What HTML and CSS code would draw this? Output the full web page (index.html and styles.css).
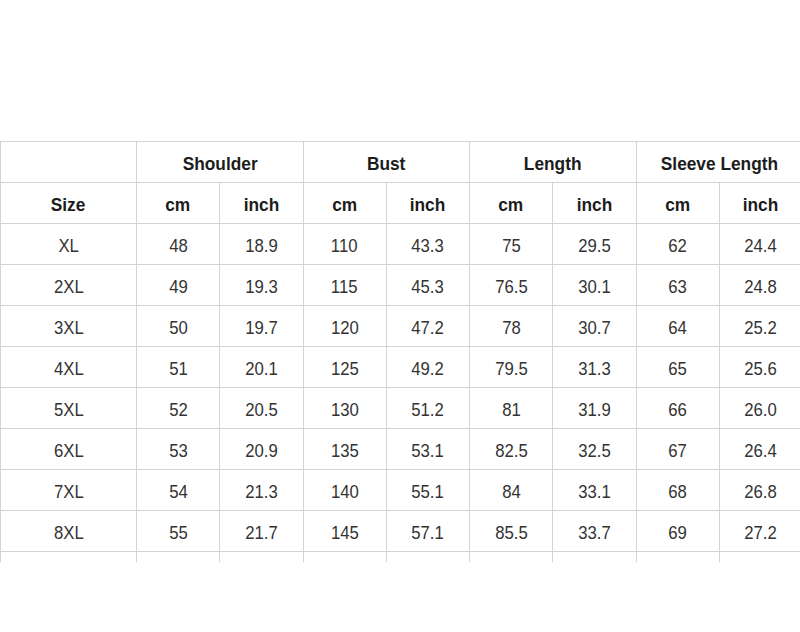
FILE: index.html
```html
<!DOCTYPE html>
<html>
<head>
<meta charset="utf-8">
<link rel="stylesheet" href="styles.css">
</head>
<body>
<div class="page">
<table class="size-table">
<colgroup>
<col class="c-size"><col><col><col><col><col><col><col><col>
</colgroup>
<thead>
<tr class="hrow">
<th class="blank"></th>
<th colspan="2"><span class="h">Shoulder</span></th>
<th colspan="2"><span class="h">Bust</span></th>
<th colspan="2"><span class="h">Length</span></th>
<th colspan="2"><span class="h">Sleeve Length</span></th>
</tr>
<tr class="hrow">
<th><span class="h">Size</span></th>
<th><span class="h">cm</span></th><th><span class="h">inch</span></th>
<th><span class="h">cm</span></th><th><span class="h">inch</span></th>
<th><span class="h">cm</span></th><th><span class="h">inch</span></th>
<th><span class="h">cm</span></th><th><span class="h">inch</span></th>
</tr>
</thead>
<tbody>
<tr><td><span class="d">XL</span></td><td><span class="d">48</span></td><td><span class="d">18.9</span></td><td><span class="d">110</span></td><td><span class="d">43.3</span></td><td><span class="d">75</span></td><td><span class="d">29.5</span></td><td><span class="d">62</span></td><td><span class="d">24.4</span></td></tr>
<tr><td><span class="d">2XL</span></td><td><span class="d">49</span></td><td><span class="d">19.3</span></td><td><span class="d">115</span></td><td><span class="d">45.3</span></td><td><span class="d">76.5</span></td><td><span class="d">30.1</span></td><td><span class="d">63</span></td><td><span class="d">24.8</span></td></tr>
<tr><td><span class="d">3XL</span></td><td><span class="d">50</span></td><td><span class="d">19.7</span></td><td><span class="d">120</span></td><td><span class="d">47.2</span></td><td><span class="d">78</span></td><td><span class="d">30.7</span></td><td><span class="d">64</span></td><td><span class="d">25.2</span></td></tr>
<tr><td><span class="d">4XL</span></td><td><span class="d">51</span></td><td><span class="d">20.1</span></td><td><span class="d">125</span></td><td><span class="d">49.2</span></td><td><span class="d">79.5</span></td><td><span class="d">31.3</span></td><td><span class="d">65</span></td><td><span class="d">25.6</span></td></tr>
<tr><td><span class="d">5XL</span></td><td><span class="d">52</span></td><td><span class="d">20.5</span></td><td><span class="d">130</span></td><td><span class="d">51.2</span></td><td><span class="d">81</span></td><td><span class="d">31.9</span></td><td><span class="d">66</span></td><td><span class="d">26.0</span></td></tr>
<tr><td><span class="d">6XL</span></td><td><span class="d">53</span></td><td><span class="d">20.9</span></td><td><span class="d">135</span></td><td><span class="d">53.1</span></td><td><span class="d">82.5</span></td><td><span class="d">32.5</span></td><td><span class="d">67</span></td><td><span class="d">26.4</span></td></tr>
<tr><td><span class="d">7XL</span></td><td><span class="d">54</span></td><td><span class="d">21.3</span></td><td><span class="d">140</span></td><td><span class="d">55.1</span></td><td><span class="d">84</span></td><td><span class="d">33.1</span></td><td><span class="d">68</span></td><td><span class="d">26.8</span></td></tr>
<tr><td><span class="d">8XL</span></td><td><span class="d">55</span></td><td><span class="d">21.7</span></td><td><span class="d">145</span></td><td><span class="d">57.1</span></td><td><span class="d">85.5</span></td><td><span class="d">33.7</span></td><td><span class="d">69</span></td><td><span class="d">27.2</span></td></tr>
<tr class="tail"><td></td><td></td><td></td><td></td><td></td><td></td><td></td><td></td><td></td></tr>
</tbody>
</table>
</div>
</body>
</html>
```

FILE: styles.css
```css
html, body {
  margin: 0;
  padding: 0;
  background: #ffffff;
}
.page {
  width: 800px;
  height: 632px;
  overflow: hidden;
  padding-top: 141px;
  box-sizing: border-box;
}
.size-table {
  border-collapse: collapse;
  table-layout: fixed;
  width: 803px;
  font-family: "Liberation Sans", Arial, sans-serif;
}
.c-size {
  width: 136px;
}
.size-table th,
.size-table td {
  border: 1px solid #d3d3d3;
  padding: 0;
  text-align: center;
  vertical-align: middle;
  white-space: nowrap;
}
.hrow {
  height: 41px;
}
.size-table tbody tr {
  height: 41px;
}
.size-table th {
  padding-top: 3px;
}
.size-table td {
  padding-top: 4px;
}
.h {
  display: inline-block;
  font-size: 19px;
  font-weight: 700;
  color: #1c1c1c;
  transform: scaleX(0.91);
}
.d {
  display: inline-block;
  font-size: 19px;
  font-weight: 400;
  color: #333333;
  transform: scaleX(0.88);
}
.size-table tr.tail {
  height: 10px;
}
.size-table tr.tail td {
  border-bottom: none;
  padding: 0;
}
```
